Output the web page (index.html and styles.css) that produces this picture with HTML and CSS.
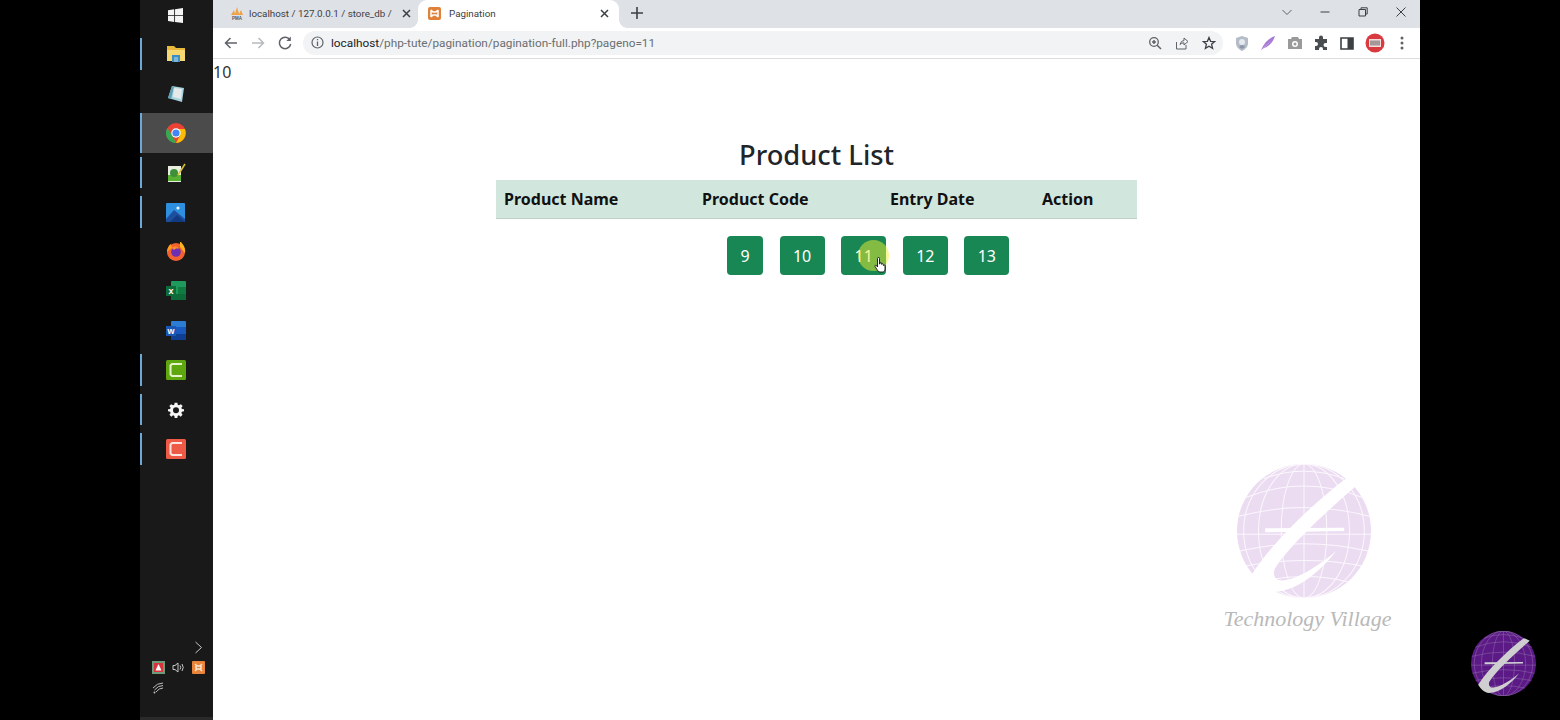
FILE: index.html
```html
<!DOCTYPE html>
<html lang="en">
<head>
<meta charset="utf-8">
<title>Pagination</title>
<link rel="stylesheet" href="styles.css">
</head>
<body>
<svg class="defs" width="0" height="0" aria-hidden="true">
  <symbol id="globe" viewBox="0 0 200 200">
    <circle class="g-disc" cx="100" cy="100" r="100"/>
    <g class="g-lines">
      <path d="M100 0V200"/>
      <ellipse cx="100" cy="100" rx="34" ry="100"/>
      <ellipse cx="100" cy="100" rx="68" ry="100"/>
      <ellipse cx="100" cy="100" rx="90" ry="100"/>
      <path d="M13 50Q100 16 187 50"/>
      <path d="M3 78Q100 52 197 78"/>
      <path d="M0 105H200"/>
      <path d="M4 130Q100 108 196 130"/>
      <path d="M14 152Q100 136 186 152"/>
      <path d="M34 176Q100 160 166 176"/>
      <path d="M40 22Q100 0 160 22"/>
    </g>
    <path class="g-swoosh" d="M42 96L160 95L160 100L42 102Z"/>
    <path class="g-swoosh" d="M181 30C170 24 166 22 162 22C110 62 52 118 22 165C30 178 40 188 55 191C90 190 125 160 148 130C125 150 92 172 68 174C58 174 53 168 56 157C78 122 132 72 181 30Z"/>
  </symbol>
</svg>

<aside class="taskbar">
  <div class="task task-start">
    <svg width="15" height="15" viewBox="0 0 16 16"><path fill="#f4f4f4" d="M0 2.3L6.6 1.3V7.6H0ZM7.5 1.2L16 0V7.6H7.5ZM0 8.5H6.6V14.8L0 13.8ZM7.5 8.5H16V16L7.5 14.9Z"/></svg>
  </div>
  <div class="task open">
    <svg width="20" height="18" viewBox="0 0 20 18"><path fill="#e8b93a" d="M1 1H8L10 3H19V16H1Z"/><path fill="#f6d873" d="M1 5H19V16H1Z"/><path fill="#3b8ec4" d="M6 10H14V17H12V12H8V17H6Z"/><path fill="#7fb5d6" d="M8 12H12V17H8Z"/></svg>
  </div>
  <div class="task">
    <svg width="20" height="20" viewBox="0 0 20 20"><path fill="#a7d3de" d="M6 2L18 4L16 18L2 14Z"/><path fill="#5f9fb3" d="M6 2L2 14L5 15L8 3Z"/><path fill="#e5e9ea" d="M8 4L16 5L15 15L7 13Z"/></svg>
  </div>
  <div class="task open active">
    <svg width="20" height="20" viewBox="0 0 20 20"><circle cx="10" cy="10" r="10" fill="#ea4335"/><path fill="#34a853" d="M1.3 5L6.2 12.6L10 20A10 10 0 0 1 1.3 5Z"/><path fill="#fbbc05" d="M10 6H18.9A10 10 0 0 1 10 20L14 12.5Z"/><circle cx="10" cy="10" r="4.7" fill="#fff"/><circle cx="10" cy="10" r="3.6" fill="#4285f4"/></svg>
  </div>
  <div class="task open">
    <svg width="20" height="20" viewBox="0 0 20 20"><path fill="#e9efe0" d="M2 3H15V19H2Z"/><path fill="#58b031" d="M2 12H15V18H2Z"/><circle cx="8" cy="10" r="4" fill="#3f8f3a"/><path stroke="#d9c02f" stroke-width="1.6" d="M12 12L19 1" fill="none"/></svg>
  </div>
  <div class="task open">
    <svg width="20" height="20" viewBox="0 0 20 20"><rect y="1" width="19" height="19" rx="1" fill="#2f8fdf"/><path fill="#1e4f9e" d="M0 17L8 8L19 17V20H0Z"/><path fill="#113a80" d="M4 20L11 13L19 20Z"/><circle cx="12" cy="6" r="1.6" fill="#e8f4ff"/></svg>
  </div>
  <div class="task">
    <svg width="20" height="20" viewBox="0 0 20 20"><circle cx="10" cy="10" r="9" fill="#f2622e"/><path fill="#ffb21c" d="M14 -1C17 2 20 6 19 11L14 5Z"/><path fill="#ff9a20" d="M1 10C1 6 3 3 5 2L6 6Z"/><circle cx="10" cy="10" r="4.8" fill="#6a2fb3"/><path fill="#ff8a2a" d="M6 6C8 4 12 4 13 7C11 6 9 7 8 8Z"/></svg>
  </div>
  <div class="task">
    <svg width="20" height="20" viewBox="0 0 20 20"><rect x="5" width="15" height="19" rx="1" fill="#1d9a5c"/><rect x="12" y="6" width="8" height="7" fill="#107c41"/><rect x="5" y="13" width="15" height="6" fill="#0f6a3a"/><rect y="5" width="10" height="10" fill="#0e6b3a"/><text class="office" x="5" y="13" text-anchor="middle">x</text></svg>
  </div>
  <div class="task">
    <svg width="20" height="20" viewBox="0 0 20 20"><rect x="5" width="15" height="19" rx="1" fill="#2b7cd3"/><rect x="5" y="6" width="15" height="7" fill="#185abd"/><rect x="5" y="13" width="15" height="6" fill="#103f91"/><rect y="5" width="10" height="10" fill="#1a56b4"/><text class="office" x="5" y="13" text-anchor="middle">w</text></svg>
  </div>
  <div class="task open">
    <svg width="20" height="20" viewBox="0 0 20 20"><rect width="20" height="20" rx="1.5" fill="#5fa70f"/><path fill="none" stroke="#e4f3c8" stroke-width="2" d="M16 4H6L4.5 5.5V14.5L6 16H16"/></svg>
  </div>
  <div class="task open">
    <svg width="16" height="16" viewBox="0 0 24 24"><path fill="#f5f5f5" fill-rule="evenodd" d="M10 1H14L14.6 4.2L16.6 5L19.3 3.2L22 6L20 8.6L20.9 10.6L24 11V14L20.9 14.6L20 16.6L21.8 19.3L19 22L16.4 20L14.4 20.9L14 24H10L9.6 20.9L7.6 20L5 22L2.2 19.3L4 16.6L3.1 14.6L0 14V11L3.1 10.6L4 8.6L2 6L4.7 3.2L7.4 5L9.4 4.2ZM12 8A4.5 4.5 0 1 0 12 17A4.5 4.5 0 1 0 12 8Z"/></svg>
  </div>
  <div class="task open">
    <svg width="20" height="20" viewBox="0 0 20 20"><rect width="20" height="20" rx="1.5" fill="#ee5a45"/><path fill="none" stroke="#fde4df" stroke-width="2" d="M16 4H6L4.5 5.5V14.5L6 16H16"/></svg>
  </div>
  <div class="tray">
    <div class="tray-row tray-more">
      <svg width="9" height="13" viewBox="0 0 9 13"><path fill="none" stroke="#c8c8c8" d="M1.5 1L7.5 6.5L1.5 12"/></svg>
    </div>
    <div class="tray-row">
      <svg width="13" height="13" viewBox="0 0 13 13"><rect width="13" height="13" fill="#6d9a78"/><rect x="2" y="2" width="9" height="9" fill="#d8333a"/><path fill="#fff" d="M6.5 3L9.5 9.5H3.5Z"/></svg>
      <svg width="13" height="13" viewBox="0 0 13 13"><path fill="none" stroke="#c8c8c8" d="M1 4.5H3L6 2V11L3 8.5H1ZM8 4.5Q9.5 6.5 8 8.5M10 3Q12.5 6.5 10 10"/></svg>
      <svg width="13" height="13" viewBox="0 0 13 13"><rect width="13" height="13" rx="1" fill="#e8853a"/><path fill="none" stroke="#fbe6d2" stroke-width="1.5" d="M3 3L5 5H8L10 3M3 10L5 8H8L10 10M4 5V8M9 5V8"/></svg>
    </div>
    <div class="tray-row tray-wifi">
      <svg width="12" height="12" viewBox="0 0 12 12"><path fill="none" stroke="#bdbdbd" d="M1 6Q5 1 11 1M2.5 8Q6 3.5 11 3.5M4 10Q7 6 11 6"/><circle cx="2.5" cy="10.5" r="1" fill="#bdbdbd"/></svg>
    </div>
  </div>
</aside>

<main class="browser">
  <header class="tabbar">
    <div class="tab">
      <svg class="favicon" width="16" height="14" viewBox="0 0 16 14"><path fill="#f0a146" d="M2 9L5 4L6 8L8 1L10 8L12 4L14 9Z"/><text class="pma" x="8" y="13.5" text-anchor="middle">PMA</text></svg>
      <span class="tab-title">localhost / 127.0.0.1 / store_db /</span>
      <svg class="tab-close" width="9" height="9" viewBox="0 0 9 9"><path stroke="#3c4043" stroke-width="1.5" d="M1 1L8 8M8 1L1 8"/></svg>
    </div>
    <div class="tab tab-active">
      <svg class="favicon" width="13" height="13" viewBox="0 0 13 13"><rect width="13" height="13" rx="2" fill="#e0813a"/><path fill="none" stroke="#fff" stroke-width="1.5" d="M3 3L5 5H8L10 3M3 10L5 8H8L10 10M3 3V10M10 3V10"/></svg>
      <span class="tab-title">Pagination</span>
      <svg class="tab-close" width="9" height="9" viewBox="0 0 9 9"><path stroke="#3c4043" stroke-width="1.5" d="M1 1L8 8M8 1L1 8"/></svg>
    </div>
    <svg class="new-tab" width="12" height="12" viewBox="0 0 12 12"><path stroke="#3c4043" stroke-width="1.6" d="M6 0V12M0 6H12"/></svg>
    <div class="window-controls">
      <svg width="12" height="12" viewBox="0 0 12 12"><path fill="none" stroke="#5f6368" d="M1.5 4L6 8.5L10.5 4"/></svg>
      <svg width="12" height="12" viewBox="0 0 12 12"><path stroke="#3c4043" d="M1.5 6H10.5"/></svg>
      <svg width="12" height="12" viewBox="0 0 12 12"><path fill="none" stroke="#3c4043" d="M2 3.5H8.5V10H2ZM4 3.5V1.8H10.2V8H8.5"/></svg>
      <svg width="12" height="12" viewBox="0 0 12 12"><path stroke="#3c4043" d="M1.5 1.5L10.5 10.5M10.5 1.5L1.5 10.5"/></svg>
    </div>
  </header>

  <nav class="toolbar">
    <div class="nav-buttons">
      <svg width="18" height="18" viewBox="0 0 18 18"><path fill="none" stroke="#5f6368" stroke-width="1.5" d="M15 9H3.5M8.5 4L3.5 9L8.5 14"/></svg>
      <svg width="18" height="18" viewBox="0 0 18 18"><path fill="none" stroke="#b6b9bd" stroke-width="1.5" d="M3 9H14.5M9.5 4L14.5 9L9.5 14"/></svg>
      <svg width="18" height="18" viewBox="0 0 18 18"><path fill="none" stroke="#5f6368" stroke-width="1.5" d="M14 6A5.7 5.7 0 1 0 14.7 10"/><path fill="#5f6368" d="M14.8 2.5V7H10.3Z"/></svg>
    </div>
    <div class="omnibox">
      <svg width="13" height="13" viewBox="0 0 13 13"><circle cx="6.5" cy="6.5" r="5.5" fill="none" stroke="#5f6368" stroke-width="1.2"/><path stroke="#5f6368" stroke-width="1.3" d="M6.5 5.5V10M6.5 3V4.3"/></svg>
      <span class="url"><span class="url-host">localhost</span>/php-tute/pagination/pagination-full.php?pageno=11</span>
      <div class="omni-actions">
        <svg width="14" height="14" viewBox="0 0 14 14"><circle cx="6" cy="6" r="4.3" fill="none" stroke="#5f6368" stroke-width="1.3"/><path stroke="#5f6368" stroke-width="1.5" d="M9.2 9.2L13 13M4 6H8M6 4V8"/></svg>
        <svg width="14" height="14" viewBox="0 0 14 14"><path fill="none" stroke="#5f6368" d="M1.5 6V13H11V9M5 8.5Q6 4.500 9 4.5V2L13 5.5L9 9V6.8Q6.5 6.8 5 8.5Z"/></svg>
        <svg width="14" height="14" viewBox="0 0 14 14"><path fill="none" stroke="#3c4043" stroke-width="1.3" d="M7 1.5L8.6 5.3L12.7 5.6L9.6 8.3L10.6 12.3L7 10.2L3.4 12.3L4.4 8.3L1.3 5.6L5.4 5.3Z"/></svg>
      </div>
    </div>
    <div class="extensions">
      <svg width="18" height="18" viewBox="0 0 18 18"><path fill="#b4bcc8" d="M9 2L15 4V9C15 13 12 15.5 9 17C6 15.5 3 13 3 9V4Z"/><circle cx="9" cy="8" r="3" fill="#e6eaf0"/><path fill="#8b96a8" d="M6 13Q9 9 12 13L9 15Z"/></svg>
      <svg width="18" height="18" viewBox="0 0 18 18"><path fill="#a77ad6" d="M2 16C5 9 10 4 16 2C14 8 10 13 5 14Z"/><path fill="#e1d0f2" d="M2 16L13 6L6 13Z"/></svg>
      <svg width="18" height="18" viewBox="0 0 18 18"><path fill="#9a9a9a" fill-rule="evenodd" d="M6 3H12L13 5H16V15H2V5H5ZM9 7A3 3 0 1 0 9 13A3 3 0 1 0 9 7Z"/><circle cx="9" cy="10" r="1.5" fill="#9a9a9a"/></svg>
      <svg width="18" height="18" viewBox="0 0 18 18"><path fill="#4a4d50" d="M7 3.5A2 2 0 0 1 11 3.5V5H15V9H13.5A2 2 0 0 0 13.5 13H15V16H11V15A2 2 0 0 0 7 15V16H3V12H4A2 2 0 0 0 4 8H3V5H7Z"/></svg>
      <svg width="18" height="18" viewBox="0 0 18 18"><path fill="none" stroke="#3c4043" stroke-width="1.6" d="M3 4H15V15H3Z"/><rect x="9.5" y="4" width="5.5" height="11" fill="#3c4043"/></svg>
      <svg width="20" height="20" viewBox="0 0 20 20"><circle cx="10" cy="10" r="9.5" fill="#d93a40"/><rect x="4" y="6" width="12" height="8" fill="#f3dcdc"/><path stroke="#555" stroke-width="1" d="M6 7.5V12.5M8 7.5V12.5M10 7.5V12.5M12 7.5V12.5M14 7.5V12.5"/></svg>
      <svg width="18" height="18" viewBox="0 0 18 18"><circle cx="9" cy="4" r="1.5" fill="#5f6368"/><circle cx="9" cy="9" r="1.5" fill="#5f6368"/><circle cx="9" cy="14" r="1.5" fill="#5f6368"/></svg>
    </div>
  </nav>

  <section class="page">
    <p class="count">10</p>
    <div class="container">
      <h1 class="title">Product List</h1>
      <table class="products">
        <colgroup>
          <col class="col-name"><col class="col-code"><col class="col-date"><col class="col-action">
        </colgroup>
        <thead>
          <tr><th>Product Name</th><th>Product Code</th><th>Entry Date</th><th>Action</th></tr>
        </thead>
      </table>
      <ul class="pagination">
        <li><a class="page-link">9</a></li>
        <li><a class="page-link">10</a></li>
        <li class="current">
          <a class="page-link">11</a>
          <span class="cursor-halo"></span>
          <svg class="cursor-hand" width="12" height="16" viewBox="0 0 12 16"><path fill="#fff" stroke="#111" stroke-width=".9" d="M3.5 1.5A1 1 0 0 1 5.5 1.5V7H6V6A1 1 0 0 1 7.7 6V7.5A1 1 0 0 1 9.4 7.5V8.5A1 1 0 0 1 11 8.5V12C11 14 10 15 8.5 15H6C4.5 15 4 14 3 12.5L1 9.5C.6 8.5 1.8 7.8 2.5 8.5L3.5 10Z"/></svg>
        </li>
        <li><a class="page-link">12</a></li>
        <li><a class="page-link">13</a></li>
      </ul>
    </div>
    <div class="watermark">
      <svg class="globe globe-soft" width="134" height="134"><use href="#globe"/></svg>
      <span class="watermark-text">Technology Village</span>
    </div>
  </section>
</main>

<svg class="globe globe-corner" width="65" height="65"><use href="#globe"/></svg>
</body>
</html>
```

FILE: styles.css
```css
* {
  box-sizing: border-box;
}

html,
body {
  height: 100%;
}

body {
  margin: 0;
  height: 720px;
  overflow: hidden;
  background: #000;
  padding-left: 140px;
  display: flex;
  font-family: "Noto Sans", "Open Sans", sans-serif;
  color: #212529;
}

.defs {
  position: absolute;
}

/* Vertical taskbar */
.taskbar {
  width: 73px;
  flex: none;
  height: 720px;
  background: #191919;
  display: flex;
  flex-direction: column;
  border-bottom: 3px solid #2a2a2a;
}

.task {
  height: 39.5px;
  flex: none;
  display: flex;
  align-items: center;
  justify-content: center;
  padding-right: 2px;
  position: relative;
}

.task-start {
  height: 30px;
  margin-bottom: 4.4px;
}

.task.open::before {
  content: "";
  position: absolute;
  left: 0;
  top: 4px;
  bottom: 4px;
  width: 2px;
  background: #6aa9d8;
}

.task.active {
  background: #4b4b4b;
}

.task.active::before {
  top: 0;
  bottom: 0;
}

.office {
  font: 700 9px "Liberation Sans", sans-serif;
  fill: #fff;
}

.tray {
  margin-top: auto;
  padding: 0 0 18px 12px;
  display: flex;
  flex-direction: column;
}

.tray-row {
  display: flex;
  align-items: center;
  gap: 7px;
  height: 20px;
}

.tray-wifi {
  height: 22px;
}

.tray-more {
  padding-left: 42px;
}

/* Browser window */
.browser {
  width: 1207px;
  flex: none;
  height: 720px;
  background: #fff;
  display: flex;
  flex-direction: column;
  position: relative;
}

.tabbar {
  height: 28px;
  flex: none;
  background: #dee1e6;
  display: flex;
  align-items: stretch;
}

.tab {
  width: 205px;
  padding: 0 7px 2px 16px;
  display: flex;
  align-items: center;
  font: 9.8px Roboto, sans-serif;
  color: #3c4043;
  position: relative;
}

.tab .favicon {
  flex: none;
  margin-right: 4px;
}

.tab-title {
  flex: 1;
  white-space: nowrap;
}

.tab-close {
  flex: none;
}

.pma {
  font: 700 4.5px "Liberation Sans", sans-serif;
  fill: #555;
}

.tab-active {
  width: 201px;
  padding-left: 10px;
  padding-right: 10px;
  background: #fff;
  border-radius: 9px 9px 0 0;
}

.tab-active .favicon {
  margin-right: 8px;
}

.tab-active::before,
.tab-active::after {
  content: "";
  position: absolute;
  bottom: 0;
  width: 8px;
  height: 8px;
}

.tab-active::before {
  left: -8px;
  background: radial-gradient(circle at 0 0, transparent 7.5px, #fff 8px);
}

.tab-active::after {
  right: -8px;
  background: radial-gradient(circle at 100% 0, transparent 7.5px, #fff 8px);
}

.new-tab {
  margin: 7px 0 0 12px;
  flex: none;
}

.window-controls {
  margin-left: auto;
  padding-right: 13px;
  display: flex;
  align-items: center;
  gap: 26px;
  height: 24px;
}

.toolbar {
  height: 31px;
  flex: none;
  padding: 0 9px 1px;
  background: #fff;
  border-bottom: 1px solid #dcdcdc;
  display: flex;
  align-items: center;
}

.nav-buttons {
  display: flex;
  gap: 9px;
  flex: none;
}

.omnibox {
  margin: 0 10px 0 9px;
  height: 24px;
  flex: 1;
  background: #f1f3f4;
  border-radius: 12px;
  display: flex;
  align-items: center;
  padding: 0 7px 0 8px;
  gap: 7px;
}

.url {
  font: 11.8px Roboto, sans-serif;
  color: #6a6e72;
  white-space: nowrap;
  flex: 1;
  margin-top: 1px;
}

.url-host {
  color: #202124;
}

.omni-actions {
  display: flex;
  align-items: center;
  gap: 13px;
}

.extensions {
  display: flex;
  align-items: center;
  gap: 8.33px;
  flex: none;
}

/* Page content */
.page {
  flex: 1;
  position: relative;
}

.count {
  margin: 0;
  font-size: 16px;
  line-height: 24px;
  padding-top: 1px;
  color: #333;
}

.container {
  width: 641px;
  margin: 52px 0 0 283px;
}

.title {
  margin: 0;
  font-size: 27.3px;
  font-weight: 500;
  line-height: 38px;
  text-align: center;
}

.products {
  width: 100%;
  table-layout: fixed;
  border-collapse: collapse;
  margin-top: 6px;
}

.col-name { width: 198px; }
.col-code { width: 188px; }
.col-date { width: 152px; }
.col-action { width: 103px; }

.products th {
  height: 38px;
  padding: 1px 8px 0;
  background: #d1e7dd;
  border-bottom: 1px solid #bfd0c7;
  text-align: left;
  font-size: 16px;
  font-weight: 700;
  color: #111;
}

.pagination {
  list-style: none;
  margin: 17px 0 0;
  padding: 0 0 0 231px;
  display: flex;
  gap: 16.6px;
}

.pagination li {
  position: relative;
}

.page-link {
  display: block;
  height: 39px;
  padding: 0 9px;
  min-width: 36px;
  background: #198754;
  color: #fff;
  border-radius: 4px;
  font-size: 16px;
  line-height: 41px;
  text-align: center;
}

.pagination li:not(:first-child) .page-link {
  width: 45px;
}

.cursor-halo {
  position: absolute;
  left: 17px;
  top: 4px;
  width: 31px;
  height: 31px;
  border-radius: 50%;
  background: rgba(238, 240, 50, .5);
}

.cursor-hand {
  position: absolute;
  left: 33px;
  top: 21px;
}

/* Watermarks */
.watermark {
  position: absolute;
  left: 1011px;
  top: 405px;
  width: 167px;
  display: flex;
  flex-direction: column;
  align-items: center;
}

.watermark-text {
  margin-top: 8px;
  font: italic 22px "Liberation Serif", serif;
  color: #b9b9b9;
  white-space: nowrap;
}

.globe-soft {
  margin-right: 7px;
  --disc: #ebdcf2;
  --line: #fbf7fc;
  --swoosh: #fff;
}

.globe-corner {
  position: absolute;
  left: 1471px;
  top: 631px;
  --disc: #5c1a86;
  --line: #9270aa;
  --swoosh: #cfcfd2;
}

.g-disc {
  fill: var(--disc);
}

.g-lines {
  fill: none;
  stroke: var(--line);
  stroke-width: 1.5;
}

.g-swoosh {
  fill: var(--swoosh);
}
```
